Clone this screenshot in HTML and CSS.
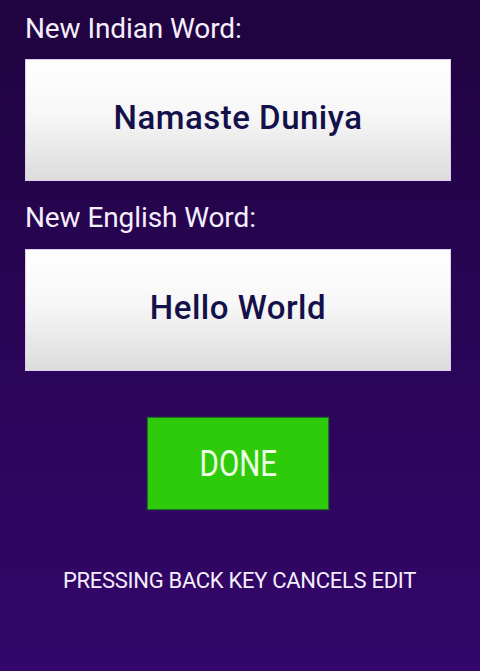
FILE: index.html
```html
<!DOCTYPE html>
<html>
<head>
<meta charset="utf-8">
<link rel="stylesheet" href="styles.css">
</head>
<body>
<div class="screen">
  <div class="field">
    <div class="label">New Indian Word:</div>
    <div class="box"><span class="value">Namaste Duniya</span></div>
  </div>
  <div class="field second">
    <div class="label">New English Word:</div>
    <div class="box"><span class="value">Hello World</span></div>
  </div>
  <div class="actions">
    <div class="done"><span class="done-text">DONE</span></div>
  </div>
  <div class="hint">PRESSING BACK KEY CANCELS EDIT</div>
</div>
</body>
</html>
```
FILE: styles.css
```css
html, body {
  margin: 0;
  padding: 0;
  height: 100%;
}
body {
  background: linear-gradient(180deg, #200340 0%, #2a0556 50%, #33066b 100%);
  font-family: Roboto, "Liberation Sans", sans-serif;
}
.screen {
  padding: 9px 29px 0 25px;
  box-sizing: border-box;
  width: 480px;
  height: 671px;
}
.field.second {
  margin-top: 17px;
}
.label {
  font-size: 28px;
  line-height: 40px;
  color: #f5effc;
  height: 40px;
  letter-spacing: -0.1px;
}
.box {
  margin-top: 10px;
  height: 122px;
  box-sizing: border-box;
  padding-bottom: 5px;
  border: 1px solid #dccdf0;
  background: linear-gradient(180deg, #ffffff 0%, #f7f7f7 45%, #dcdcdc 100%);
  display: flex;
  align-items: center;
  justify-content: center;
}
.field.second .box {
  margin-top: 11px;
}
.value {
  font-size: 33px;
  color: #14104a;
  font-weight: 500;
  letter-spacing: 0.5px;
}
.actions {
  margin-top: 47px;
  display: flex;
  justify-content: center;
}
.done {
  width: 180px;
  height: 91px;
  background: #2ecb0b;
  box-shadow: 0 0 1px 1px #226a22;
  display: flex;
  align-items: center;
  justify-content: center;
  color: #eefde6;
  font-size: 36px;
}
.done-text {
  display: inline-block;
  transform: scaleX(0.82);
}
.hint {
  margin-top: 59px;
  text-align: center;
  color: #f4eefc;
  font-size: 22px;
  letter-spacing: -0.3px;
  margin-left: 3px;
}
```
